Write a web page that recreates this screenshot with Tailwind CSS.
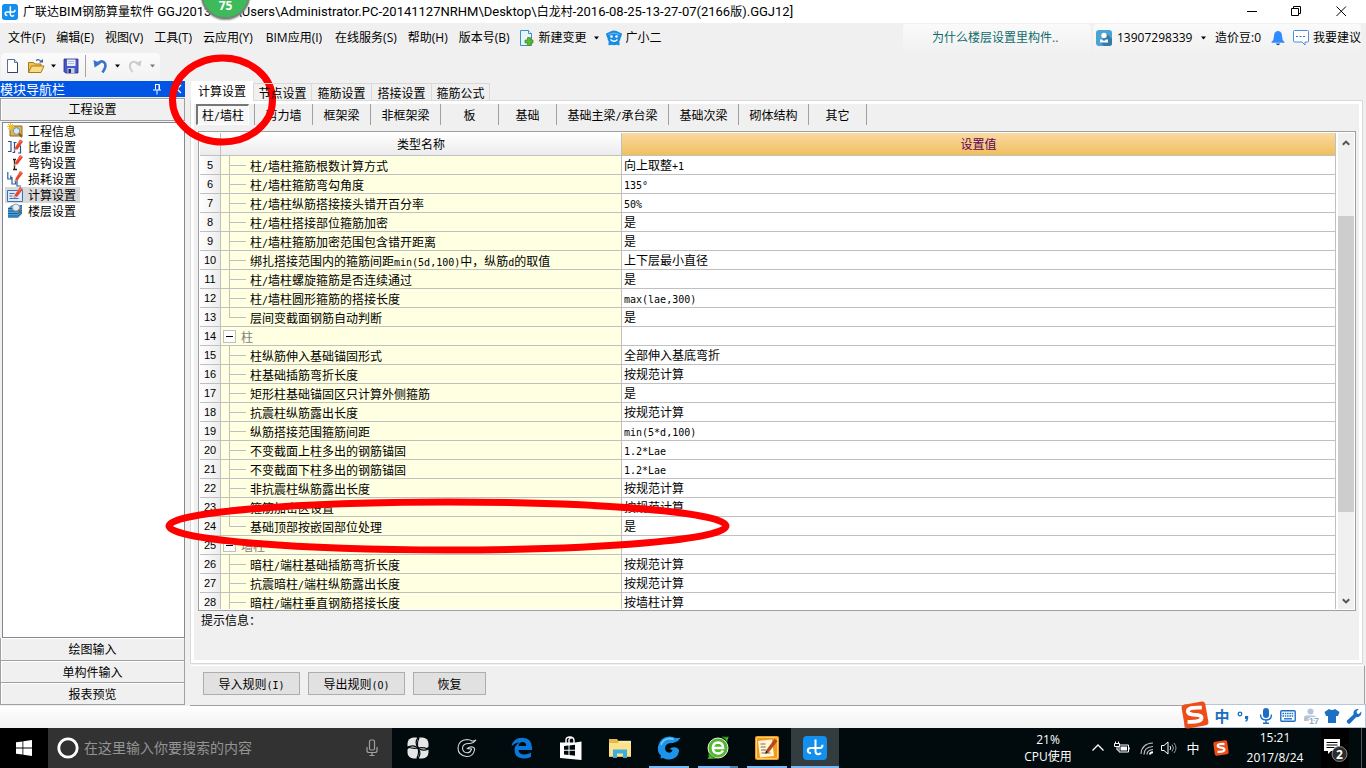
<!DOCTYPE html>
<html lang="zh-CN">
<head>
<meta charset="utf-8">
<meta name="viewport" content="width=device-width, initial-scale=1">
<title>广联达BIM钢筋算量软件 GGJ2013</title>
<script src="https://cdn.jsdelivr.net/npm/@tailwindcss/browser@4"></script>
</head>
<body class="relative flex h-screen flex-col overflow-hidden bg-[#f0f0f0] font-['Open_Sans','Noto_Sans_CJK_SC',sans-serif] text-[12px] leading-4 text-black">

<!-- Title bar -->
<header class="flex h-[23px] shrink-0 items-center bg-white pl-0.5">
  <svg class="size-4 shrink-0" viewBox="0 0 24 24"><rect width="24" height="24" rx="4" fill="#1390ee"/><path d="M12.500 3.500V15.500a2.800 2.800 0 0 0 5.300 1.200M8 17.200q-3.200-.3-3.200-2.700 0-2.500 3-2.500H17q2.500 0 2.500-3.200" fill="none" stroke="#fff" stroke-width="2.200"/></svg>
  <h1 class="ml-[5px] whitespace-pre font-['Roboto','Noto_Sans_CJK_SC',sans-serif] text-[13px]"><span class="text-[12px]">广联达</span>BIM<span class="text-[12px]">钢筋算量软件</span> GGJ2013 - [C:\Users\Administrator.PC-20141127NRHM\Desktop\<span class="text-[12px]">白龙村</span>-2016-08-25-13-27-07(2166<span class="text-[12px]">版</span>).GGJ12]</h1>
  <div class="ml-auto flex pr-0.5">
    <button aria-label="最小化" class="flex h-5 w-[45px] items-center justify-center"><svg class="size-3" viewBox="0 0 12 12"><path d="M1 5.500h10" stroke="#000"/></svg></button>
    <button aria-label="还原" class="flex h-5 w-[45px] items-center justify-center"><svg class="size-3" viewBox="0 0 12 12" fill="none" stroke="#000"><path d="M.5 2.500h7v7h-7zM2.500 2.500v-2h7v7h-2"/></svg></button>
    <button aria-label="关闭" class="flex h-5 w-[45px] items-center justify-center"><svg class="size-3" viewBox="0 0 12 12"><path d="M.5 .5l9.500 9.500M10 .5L.5 10" stroke="#000"/></svg></button>
  </div>
</header>

<!-- Menu bar -->
<nav class="flex h-[30px] shrink-0 items-center whitespace-nowrap pl-2">
  <div class="flex gap-[11px]">
    <button>文件(F)</button><button>编辑(E)</button><button>视图(V)</button><button>工具(T)</button><button>云应用(Y)</button><button class="px-0.5">BIM应用(I)</button><button>在线服务(S)</button><button>帮助(H)</button><button>版本号(B)</button>
  </div>
  <button class="ml-[9px] flex items-center gap-1">
    <svg class="size-4" viewBox="0 0 16 16"><path d="M1.500.5h8l3 3v12h-11z" fill="#e8f4fc" stroke="#3b8fc4"/><path d="M9.500.5v3h3" fill="#fff" stroke="#3b8fc4"/><path d="M8.500 7.500h3v2.500h2.500v3h-2.500v2.500h-3v-2.500h-2.500v-3h2.500z" fill="#5cb82c" stroke="#3d8c17" stroke-width=".7"/></svg>
    新建变更
    <svg class="ml-0.5 h-1 w-[7px]" viewBox="0 0 7 4"><path d="M1 .5h5L3.500 3.500z"/></svg>
  </button>
  <button class="ml-[6px] flex items-center gap-1">
    <svg class="size-4" viewBox="0 0 16 16"><path d="M8 .5q3 0 4.500 1.500L16 3.500q-.3 3-1.500 4.500 0 2-1.200 3.500l.3 3.500q-1.400.8-2.600-.2Q8 15.500 5 14.800 3.800 15.800 2.400 15l.3-3.500Q1.500 10 1.500 8 .3 6.500 0 3.500L3.500 2Q5 .5 8 .5z" fill="#188ce0"/><path d="M2.500 4.500Q8 1.500 13.500 4.500" fill="none" stroke="#6cc0f2"/><circle cx="5.500" cy="6.500" r="1.300" fill="#fff"/><circle cx="10.500" cy="6.500" r="1.300" fill="#fff"/><path d="M4.500 9.500q3.500 3.500 7 0" fill="none" stroke="#fff" stroke-width="1.300"/></svg>
    广小二
  </button>
  <div class="ml-auto flex h-7 gap-0.5 pr-[5px]">
    <a href="#" class="flex w-[188px] items-center rounded-sm bg-linear-to-b from-[#fafafa] to-[#f1f1f1] pl-[29px] text-[#0d6b6b]">为什么楼层设置里构件..</a>
    <div class="flex items-center rounded-sm bg-linear-to-b from-[#fafafa] to-[#f1f1f1] pl-[3px]">
      <button class="flex items-center">
        <svg class="mr-[5px] size-4" viewBox="0 0 16 16"><rect width="16" height="16" rx="3" fill="#4ba3d3"/><path d="M11 4l5 5v4q0 3-3 3H8l-4-4z" fill="#347ba6"/><circle cx="8" cy="5.500" r="2.700" fill="#fff"/><path d="M4 9.500h2.200L8 11l1.800-1.500H12v3H4z" fill="#fff"/></svg>
        <span class="w-[77px] text-left">13907298339</span>
        <svg class="ml-[6px] h-1 w-[7px]" viewBox="0 0 7 4"><path d="M1 .5h5L3.500 3.500z"/></svg>
      </button>
      <span class="ml-2 w-[46px]">造价豆:0</span>
      <button aria-label="通知" class="ml-[10px]"><svg class="h-4 w-[14px]" viewBox="0 0 14 16"><path d="M6 1.200q1-1 2 0Q11 2 11 6q0 4 2.500 6v.8H.5V12Q3 10 3 6q0-4 3-4.800z" fill="#2f8bff"/><path d="M5 13.500h4q-.4 1.700-2 1.700t-2-1.700z" fill="#14508f"/></svg></button>
      <button class="ml-2 flex items-center gap-1"><svg class="size-4" viewBox="0 0 16 16"><path d="M1.500.5h13a1 1 0 0 1 1 1v9.500a1 1 0 0 1-1 1h-2.500v3L9 12H1.500a1 1 0 0 1-1-1V1.500a1 1 0 0 1 1-1z" fill="#fff" stroke="#4a8ce0"/><path d="M3 6.500h10" stroke="#2a6fc8" stroke-dasharray="2 1.500"/></svg>我要建议</button>
    </div>
  </div>
</nav>

<!-- Toolbar -->
<div class="flex h-[28px] shrink-0">
  <div class="ml-px flex w-[159px] items-center rounded bg-linear-to-b from-[#fbfbfb] to-[#f2f2f2] pb-0.5 pl-1">
    <button aria-label="新建"><svg class="size-4" viewBox="0 0 16 16"><path d="M2.500 1.500h7l3 3v10h-10z" fill="#fff" stroke="#5a6f96"/><path d="M9.500 1.500v3h3" fill="#dce6f5" stroke="#5a6f96"/><path d="M12.500 5v9.500h-10" fill="none" stroke="#2d4468"/></svg></button>
    <button aria-label="打开" class="ml-[6px] flex items-center"><svg class="h-4 w-[18px]" viewBox="0 0 18 16"><path d="M1.500 14V4.500h5L8 6h6v8z" fill="#f2c24e" stroke="#a87a1e"/><path d="M1.500 14.500L4.500 8H17l-3 6.500z" fill="#fbdc83" stroke="#a87a1e"/><path d="M9 2.500q3-2 5 1" fill="none" stroke="#3a5f8c" stroke-width="1.200"/><path d="M12 4.500h4V1z" fill="#3a5f8c"/></svg><svg class="ml-[5px] h-1 w-[7px]" viewBox="0 0 7 4"><path d="M1 .5h5L3.500 3.500z"/></svg></button>
    <button aria-label="保存" class="ml-[6px]"><svg class="size-4" viewBox="0 0 16 16"><path d="M1 1h14v14H2.500L1 13.500z" fill="#4858c8" stroke="#2a2f80" stroke-width=".8"/><path d="M4 1.500h8.500V8H4z" fill="#e9eefb"/><path d="M5 3.500h6M5 5.500h6" stroke="#b0bbdd"/><path d="M4.500 10h7v5h-7z" fill="#c7cce4"/><path d="M5.500 11h2.500v4H5.500z" fill="#222a66"/></svg></button>
    <span class="mx-[6px] h-[22px] w-px bg-[#a5a5a5]"></span>
    <button aria-label="撤销" class="flex items-center"><svg class="size-4" viewBox="0 0 16 16"><path d="M1.500 2l1 7.500 6.500-4z" fill="#3a73c9"/><path d="M5 6.200q4-4.700 7.300-1.700 3 3.500-1.800 10" fill="none" stroke="#3a73c9" stroke-width="2.600"/></svg><svg class="ml-[6px] h-1 w-[7px]" viewBox="0 0 7 4"><path d="M1 .5h5L3.500 3.500z"/></svg></button>
    <button aria-label="重做" disabled class="ml-[6px] flex items-center"><svg class="size-4" viewBox="0 0 16 16"><path d="M14.500 2.500l-1.200 6-5.300-3z" fill="#c8c8c8"/><path d="M12 6.500Q7.500 2 4 5q-3 3.500 1.500 9" fill="none" stroke="#cdcdcd" stroke-width="2"/></svg><svg class="ml-[6px] h-1 w-[7px]" viewBox="0 0 7 4"><path d="M1 .5h5L3.500 3.500z" fill="#777"/></svg></button>
  </div>
</div>

<div class="flex min-h-0 flex-1 font-['Noto_Sans_CJK_SC',sans-serif]">

  <!-- Module navigation -->
  <aside class="flex w-[185px] shrink-0 flex-col">
    <div class="flex h-4 shrink-0 items-center bg-[#0055e5] text-white"><h2 class="text-[13px] leading-[14px]">模块导航栏</h2>
      <button aria-label="固定" class="ml-auto"><svg class="size-3" viewBox="0 0 12 12" fill="none" stroke="#fff"><path d="M4 1.500h4.500v5M4.500 1.500v5M2 7h8M6 7v4.500M8 2v5"/></svg></button>
      <button aria-label="关闭面板" class="ml-2 mr-0.5"><svg class="size-3" viewBox="0 0 12 12"><path d="M2 2l8 8M10 2l-8 8" stroke="#fff" stroke-width="1.300"/></svg></button>
    </div>
    <button class="mt-px h-[23px] shrink-0 border border-[#a0a0a0] pb-0.5 shadow-[inset_1px_1px_0_#fff]">工程设置</button>
    <ul class="ml-0.5 mt-px min-h-0 flex-1 border border-[#828790] bg-white pl-0.5">
      <li><button class="flex h-4 w-[75px] items-center gap-[5px] pl-0.5 leading-4 whitespace-nowrap"><svg class="size-4 shrink-0" viewBox="0 0 16 16"><path d="M4 3h11v10H3V6z" fill="#e2b64a" stroke="#946a17"/><path d="M3.500 0v7M0 3.500h7M1 1l5 5M6 1L1 6" stroke="#f2c21c"/><circle cx="9.500" cy="8" r="3.300" fill="#d5e9fb" stroke="#7890ac"/><path d="M12 10.500l3 3.500" stroke="#8c5a1e" stroke-width="2"/></svg>工程信息</button></li>
      <li><button class="flex h-4 w-[75px] items-center gap-[5px] pl-0.5 leading-4 whitespace-nowrap"><svg class="size-4 shrink-0" viewBox="0 0 16 16"><path d="M1 2.500h3v10H1M9.500 3.500H6.500M7.500 3.500v10h-2M11 7h2.500v7H11" fill="none" stroke="#2c4f8f" stroke-width="1.200"/><path d="M7.500 9.500L13 .5l3 2-5.500 8z" fill="#e8432c"/><path d="M9.500 6L14.500.8l1 .7z" fill="#f58a74"/><path d="M7.500 9.500l-.8 2.500 3.800-1.500z" fill="#d8a560"/></svg>比重设置</button></li>
      <li><button class="flex h-4 w-[75px] items-center gap-[5px] pl-0.5 leading-4 whitespace-nowrap"><svg class="size-4 shrink-0" viewBox="0 0 16 16"><path d="M6 4.500h3M7.500 4.500V14M6 14.500h4" fill="none" stroke="#222" stroke-width="1.300"/><path d="M7.500 8.500L13 0l3 2-5.500 7.500z" fill="#e8432c"/><path d="M9.500 5.500L14.500.5l1 .7z" fill="#f58a74"/><path d="M7.500 8.500l-.8 2.500 3.800-1.500z" fill="#d8a560"/></svg>弯钩设置</button></li>
      <li><button class="flex h-4 w-[75px] items-center gap-[5px] pl-0.5 leading-4 whitespace-nowrap"><svg class="size-4 shrink-0" viewBox="0 0 16 16"><path d="M.8 1v7h3V4.500M5 6v7h3.500V9M10 9v6h4" fill="none" stroke="#2c5f9f" stroke-width="1.200"/><path d="M8 8.500L13 0l3 2-5.500 7.500z" fill="#e8432c"/><path d="M9.500 5.500L14.500.5l1 .7z" fill="#f58a74"/><path d="M8 8.500L7.200 11l3.300-1.500z" fill="#d8a560"/></svg>损耗设置</button></li>
      <li><button aria-current="page" class="flex h-4 w-[75px] items-center gap-[5px] bg-[#d9d9d9] pl-0.5 leading-4 whitespace-nowrap"><svg class="size-4 shrink-0" viewBox="0 0 16 16"><path d="M.5 3.500h15v11H.5z" fill="#dbe9fb" stroke="#3f6fb5"/><path d="M2.500 6.500h5M2.500 9h3M2.500 11.500h9" stroke="#3f6fb5"/><path d="M7 9L13 0l3 2-6 8z" fill="#e8432c"/><path d="M9 6L14.500.5l1 .7z" fill="#f58a74"/><path d="M7 9l-.8 2.500L10 10z" fill="#d8a560"/></svg>计算设置</button></li>
      <li><button class="flex h-4 w-[75px] items-center gap-[5px] pl-0.5 leading-4 whitespace-nowrap"><svg class="size-4 shrink-0" viewBox="0 0 16 16"><path d="M1 5l4-3h10v9l-4 4H1z" fill="#4f9fd4"/><path d="M1 5.500h10l4-3.500M1 8h10l4-3.500M1 10.500h10l4-3.500M1 13h10l4-3.500" fill="none" stroke="#1d5d96"/><circle cx="9" cy="4.500" r="3.500" fill="#e6edf4" stroke="#9a9fa8"/><path d="M11.500 7l3 3" stroke="#8c5a1e" stroke-width="1.600"/></svg>楼层设置</button></li>
    </ul>
    <button class="h-[23px] shrink-0 border-x border-b border-[#a0a0a0] shadow-[inset_1px_1px_0_#fff]">绘图输入</button>
    <button class="h-[22px] shrink-0 border-x border-b border-[#a0a0a0] shadow-[inset_1px_1px_0_#fff]">单构件输入</button>
    <button class="mb-px h-[22px] shrink-0 border-x border-b border-[#a0a0a0] shadow-[inset_1px_1px_0_#fff]">报表预览</button>
  </aside>

  <!-- Work area -->
  <main class="flex min-w-0 flex-1 flex-col pl-[5px]">
    <div role="tablist" class="relative z-10 -mb-px flex h-5 shrink-0 items-end">
      <button role="tab" aria-selected="true" class="ml-px -mb-0.5 h-[22px] w-[62px] bg-white pb-[3px]">计算设置</button>
      <button role="tab" class="h-[18px] w-[59px] border-x border-t border-[#d9d9d9]">节点设置</button>
      <button role="tab" class="h-[18px] w-[60px] border-r border-t border-[#d9d9d9]">箍筋设置</button>
      <button role="tab" class="h-[18px] w-[60px] border-r border-t border-[#d9d9d9]">搭接设置</button>
      <button role="tab" class="h-[18px] w-[58px] border-r border-t border-[#d9d9d9]">箍筋公式</button>
    </div>
    <section class="mr-[3px] flex min-h-0 flex-1 flex-col border border-[#d9d9d9] bg-white p-[3px]">
      <div class="flex min-h-0 flex-1 flex-col bg-[#f0f0f0] pr-[3px] pl-1">
        <div class="-ml-0.5 flex h-[27px] shrink-0 items-start whitespace-nowrap">
          <button aria-pressed="true" class="mr-[5px] h-[21px] w-[53px] shrink-0 border-t-2 border-r border-b border-l-2 border-t-[#777] border-r-white border-b-white border-l-[#777] bg-[#f8f8f8]">柱<span class="font-['DejaVu_Sans_Mono'] text-[10px] leading-none">/</span>墙柱</button>
          <button class="h-[21px] w-[59px] border-x border-[#a0a0a0]">剪力墙</button>
          <button class="h-[21px] w-[58px] border-r border-[#a0a0a0]">框架梁</button>
          <button class="h-[21px] w-[70px] border-r border-[#a0a0a0]">非框架梁</button>
          <button class="h-[21px] w-[58px] border-r border-[#a0a0a0]">板</button>
          <button class="h-[21px] w-[58px] border-r border-[#a0a0a0]">基础</button>
          <button class="h-[21px] w-[112px] border-r border-[#a0a0a0]">基础主梁<span class="font-['DejaVu_Sans_Mono'] text-[10px] leading-none">/</span>承台梁</button>
          <button class="h-[21px] w-[70px] border-r border-[#a0a0a0]">基础次梁</button>
          <button class="h-[21px] w-[70px] border-r border-[#a0a0a0]">砌体结构</button>
          <button class="h-[21px] w-[58px] border-r border-[#a0a0a0]">其它</button>
        </div>
        <div class="flex min-h-0 flex-1 border border-[#a0a0a0] bg-white p-px">
          <div class="min-w-0 flex-1 overflow-hidden">
            <table class="w-full table-fixed border-separate border-spacing-0">
              <colgroup><col class="w-[21px]"><col class="w-[401px]"><col></colgroup>
              <thead>
                <tr class="h-[23px]">
                  <th class="border-r border-b border-[#c0c0c0] bg-linear-to-b from-white to-[#ececec] p-0" aria-label="序号"></th>
                  <th class="border-r border-b border-[#c0c0c0] bg-linear-to-b from-white to-[#ececec] p-0 font-normal">类型名称</th>
                  <th class="border-r border-b border-[#c0c0c0] bg-linear-to-b from-[#fad9a0] to-[#f0bf5c] p-0 font-normal text-[#600060]">设置值</th>
                </tr>
              </thead>
              <tbody id="rows"></tbody>
            </table>
          </div>
          <div class="ml-0.5 flex w-4 shrink-0 flex-col bg-[#f0f0f0]">
            <button aria-label="向上滚动" class="flex h-5 shrink-0 items-center justify-center"><svg class="size-2" viewBox="0 0 8 8"><path d="M.8 5.800L4 2.600l3.200 3.200" fill="none" stroke="#555" stroke-width="2"/></svg></button>
            <div class="flex min-h-0 flex-1 flex-col"><div class="grow-[62]"></div><div class="grow-[294] bg-[#cdcdcd]"></div><div class="grow-[80]"></div></div>
            <button aria-label="向下滚动" class="flex h-4 shrink-0 items-center justify-center"><svg class="size-2" viewBox="0 0 8 8"><path d="M.8 2.200L4 5.400l3.200-3.200" fill="none" stroke="#555" stroke-width="2"/></svg></button>
          </div>
        </div>
        <p class="h-[49px] shrink-0 pt-px pl-[3px]">提示信息：</p>
      </div>
    </section>
    <footer class="mt-px mr-px flex h-[41px] shrink-0 items-center gap-2 border-t border-r border-b border-t-white border-r-[#a0a0a0] border-b-[#a0a0a0] pb-1 pl-[13px]">
      <button class="h-[23px] w-[97px] border border-[#adadad] bg-[#e1e1e1]">导入规则<span class="font-['DejaVu_Sans_Mono'] text-[10px] leading-none">(I)</span></button>
      <button class="h-[23px] w-[97px] border border-[#adadad] bg-[#e1e1e1]">导出规则<span class="font-['DejaVu_Sans_Mono'] text-[10px] leading-none">(O)</span></button>
      <button class="h-[23px] w-[73px] border border-[#adadad] bg-[#e1e1e1]">恢复</button>
    </footer>
  </main>
</div>

<!-- Status strip with the input method bar -->
<div class="flex h-[22px] shrink-0 justify-end bg-linear-to-b from-white to-[#f2f2f2]">
  <div class="relative -mt-0.5 flex h-6 w-[182px] items-center border border-[#b5c6dd] bg-white pl-[28px] text-[#1c6fc4]">
    <svg class="absolute -top-1 -left-1 size-7" viewBox="0 0 28 28"><g transform="rotate(-10 14 14)"><rect x="2" y="2" width="24" height="24" rx="3" fill="#ee4d18"/><path d="M22 8Q8 4.500 7.500 9.500q0 3 6.500 4.300 6.500 1.200 6 4.200Q19 22.500 5.500 19.500" fill="none" stroke="#fff" stroke-width="3.800"/></g></svg>
    <button class="w-[18px] text-[15px] leading-5 font-bold">中</button>
    <button aria-label="标点" class="ml-1"><svg class="size-4" viewBox="0 0 16 16"><circle cx="5" cy="6" r="1.800" fill="none" stroke="#1c6fc4" stroke-width="1.300"/><path d="M10 8h3.200v2.500q0 2.500-2.700 3.500v-1.500q1-.6 1-1.500H10z" fill="#1c6fc4"/></svg></button>
    <button aria-label="语音" class="ml-[7px]"><svg class="size-4" viewBox="0 0 16 16"><rect x="5" y="0" width="6" height="10" rx="3" fill="#1c6fc4"/><path d="M2.500 6.500q0 5.500 5.500 5.500t5.500-5.500M8 12v3M5 15.300h6" fill="none" stroke="#1c6fc4" stroke-width="1.400"/></svg></button>
    <button aria-label="键盘" class="ml-[6px]"><svg class="size-4" viewBox="0 0 16 16"><rect x=".8" y="2.800" width="14.400" height="10.400" rx="1" fill="#fff" stroke="#1c6fc4" stroke-width="1.400"/><path d="M2.500 5.500h11M2.500 8h11" stroke="#1c6fc4" stroke-width="1.500" stroke-dasharray="1.500 .8"/><path d="M4 10.800h8" stroke="#1c6fc4" stroke-width="1.400"/></svg></button>
    <button aria-label="用户" class="ml-2"><svg class="size-4" viewBox="0 0 16 16"><circle cx="6.500" cy="3.500" r="3" fill="#b7c3d9"/><path d="M0 13V10q0-2.500 3-2.500h6.500q2 0 2.500 1.500v4z" fill="#b7c3d9"/><text x="5" y="15.500" font-family="Liberation Sans" font-size="9" font-weight="bold" fill="#9aa7bd" stroke="#fff" stroke-width="2" paint-order="stroke">17</text></svg></button>
    <button aria-label="皮肤" class="ml-1"><svg class="size-4" viewBox="0 0 16 16"><path d="M5 1q3 2 6 0l4.500 3L14 8h-2v7H4V8H2L.5 4z" fill="#1c6fc4"/></svg></button>
    <button aria-label="工具箱" class="ml-[6px]"><svg class="size-4" viewBox="0 0 16 16"><path d="M1 12.500L7.500 6.500Q7 3 9.500 1.500 11 .6 12.800 1L10.500 3.500 11 5.500l2 .5L15.200 3.500q.6 2-.7 4-1.800 2.300-4.500 1.700L4 15.500q-1 .8-2.300-.3-1.400-1.500-.7-2.700z" fill="#1c6fc4"/></svg></button>
  </div>
</div>

<!-- Taskbar -->
<footer class="flex h-10 shrink-0 bg-[#010b0e] text-white">
  <button aria-label="开始" class="flex w-12 shrink-0 items-center justify-center bg-black"><svg class="size-4" viewBox="0 0 16 16" fill="#fff"><path d="M0 2.300l6.500-.9v6.200H0zM7.300 1.300L16 0v7.600H7.300zM0 8.400h6.500v6.200L0 13.700zM7.300 8.400H16V16l-8.700-1.300z"/></svg></button>
  <label class="flex w-[344px] shrink-0 items-center bg-[#323232] pl-2">
    <svg class="size-6 shrink-0" viewBox="0 0 24 24"><circle cx="12" cy="12" r="9.200" fill="none" stroke="#fff" stroke-width="2.800"/></svg>
    <input type="text" aria-label="搜索" placeholder="在这里输入你要搜索的内容" class="ml-1 min-w-0 flex-1 bg-transparent text-[14px] leading-5 outline-none placeholder:text-[#949494]">
    <svg class="mr-3 h-[18px] w-4 shrink-0" viewBox="0 0 16 18" fill="none" stroke="#a0a0a0" stroke-width="1.200"><rect x="5.500" y="1" width="5" height="10" rx="1.500"/><path d="M3 8v3.500q0 2 2 2h6q2 0 2-2V8M8 13.500v3M5.500 16.500h5"/></svg>
  </label>
  <div class="ml-0.5 flex gap-px">
    <button aria-label="应用" class="flex w-12 items-center justify-center"><svg class="size-[22px]" viewBox="0 0 22 22"><g fill="#e6e6e6"><rect x=".5" y=".5" width="21" height="21" rx="6"/></g><g fill="none" stroke="#010b0e" stroke-width="1.200"><path d="M11.500 0Q7 5 11 11Q15 17 10.500 22"/><path d="M0 10.500Q6 7 11 11Q16 15 22 11.500"/><path d="M1 10Q6 12 11 11Q9.500 6 12 1M21 12Q16 10 11 11Q12.500 16 10 21"/></g><path d="M9.500 0h3L11.500 3zM9.500 22h3l-2-3zM0 9.500v3l3-2zM22 9.500v3l-3-1z" fill="#010b0e"/></svg></button>
    <button aria-label="G 浏览" class="flex w-12 items-center justify-center"><svg class="size-5" viewBox="0 0 20 20" fill="none" stroke="#d8d8d8" stroke-width="1.100"><path d="M19 2q-2 3-6 3.500Q6 5 5.500 10q.2 4.500 4.500 4.800 3.500 0 4.500-3.800l-4-.5q2-2 5-1.500 2.500.5 2 3Q16 19 9.500 18.500 1 17.500 1 10 1.500 2 10 1.500q3 0 5 1.500 2 .2 4-1z"/></svg></button>
    <button aria-label="Edge" class="ml-[6px] flex w-12 items-center justify-center"><svg class="size-[22px]" viewBox="0 0 22 22"><path d="M.5 9.500Q2 .800 11.500.800 20.500 1 21 10.500v2.500H7.500q.5 4.500 6 4.500 3.500 0 6.500-1.700v4.200q-3.500 1.500-7.500 1.500-9.500-.5-9-9.500Q4 8 8.500 5.500 4 5.500.5 9.500zM7.500 9h7.700q0-4-3.700-4-3.600.3-4 4z" fill="#0a78d8"/></svg></button>
    <button aria-label="应用商店" class="flex w-12 items-center justify-center"><svg class="h-6 w-[22px]" viewBox="0 0 22 24"><path d="M6 7V4q0-3 4-3 3.500 0 4 3v3M9 7V3.500Q10.500 1 13.500 2" fill="none" stroke="#fff" stroke-width="1.400"/><path d="M0 6.500h15l6.500-1V24L0 22z" fill="#fff"/><path d="M4 10l4.500-.5v4.300H4zM9.500 9.400L15 8.800v5H9.500zM4 14.700h4.500V19L4 18.500zM9.500 14.700H15v5l-5.500-.6z" fill="#010b0e"/></svg></button>
    <button aria-label="文件资源管理器" class="flex w-12 items-center justify-center"><svg class="size-[22px]" viewBox="0 0 22 22"><path d="M0 2h8l1.500 2H22v16H0z" fill="#e7b84c"/><path d="M0 6h22v13H0z" fill="#fde08a"/><path d="M9.500 3.800H22V6H9.500z" fill="#fde9ae"/><path d="M4 21v-8.500h14V21h-4v-4.500H8V21z" fill="#3aafe0"/></svg></button>
    <button aria-label="G 浏览器" class="flex w-12 flex-col items-center"><span class="flex flex-1 items-center pt-0.5"><svg class="size-6" viewBox="0 0 24 24"><path d="M23.500 1.500Q22 5.500 16 7 9 6.500 8 11.500q0 5 4.500 5.300 2.500-.3 3-2.800l-3-1Q15 10.500 19 11.500q3.500 1.500 3 4-1.500 7.500-9.500 8-4 .2-6-1.500l-3 .5.5-3Q0 16.500 1 10.500 3 1 12.500.5q4 0 6 1.500 2.500.3 5-.5z" fill="#1d94ea"/><path d="M4 9Q6 3 12.500 2.500q3 0 4 1" fill="none" stroke="#6fd0fb" stroke-width="1.500"/></svg></span><span class="h-0.5 w-10 bg-[#76b9f5]"></span></button>
    <button aria-label="安全浏览器" class="flex w-12 flex-col items-center"><span class="flex flex-1 items-center pt-0.5"><svg class="size-6" viewBox="0 0 24 24"><circle cx="12" cy="12" r="10" fill="#52b82d" stroke="#e7f5df"/><path d="M17 14.500q-1.500 3-5 3-5-.3-5.200-5.500Q7 6.800 12 6.500q5 .3 5.200 5.500H7.500" fill="none" stroke="#fff" stroke-width="2.400"/><path d="M2 23q1.500-2 1-5.500 3 4 7 5M22.500 1q-3 .5-6 0 4 2 4.500 5" fill="#52b82d" stroke="#2b8a14"/></svg></span><span class="flex h-0.5 w-10 bg-[#76b9f5]"><span class="ml-auto w-2 bg-[#527ea8]"></span></span></button>
    <button aria-label="记事" class="flex w-12 flex-col items-center"><span class="flex flex-1 items-center pt-0.5"><svg class="size-6" viewBox="0 0 24 24"><rect width="24" height="24" rx="2" fill="#f29a1d"/><rect x="1.500" y="1.500" width="21" height="21" rx="1.500" fill="none" stroke="#ffd27a"/><path d="M3 5l14-1.500L19 20 5 21.500z" fill="#fff6dc"/><path d="M5.500 8h5M5.700 11h5M6 14h5M6.500 17h9" stroke="#8d6a3a"/><path d="M11 14.500L19.500 3l3 2L14 16z" fill="#b5491b"/><path d="M11 14.500l-1 3.500 4-2z" fill="#3a2412"/></svg></span><span class="h-0.5 w-10 bg-[#76b9f5]"></span></button>
    <button aria-label="广联达" class="-ml-px flex w-12 flex-col items-center bg-[#333d40]"><span class="flex flex-1 items-center pt-0.5"><svg class="size-6" viewBox="0 0 24 24"><rect width="24" height="24" rx="4" fill="#1390ee"/><path d="M12.500 3.500V15.500a2.800 2.800 0 0 0 5.300 1.200M8 17.200q-3.200-.3-3.200-2.700 0-2.500 3-2.500H17q2.500 0 2.500-3.200" fill="none" stroke="#fff" stroke-width="2"/></svg></span><span class="h-0.5 w-12 bg-[#76b9f5]"></span></button>
  </div>
  <div class="ml-auto flex items-center">
    <div class="w-16 text-center leading-[17px]"><div>21%</div><div>CPU使用</div></div>
    <button aria-label="显示隐藏图标" class="ml-[11px]"><svg class="h-4 w-[14px]" viewBox="0 0 14 16"><path d="M1.500 10.500L7 5l5.500 5.500" fill="none" stroke="#fff" stroke-width="1.300"/></svg></button>
    <svg class="ml-[9px] size-4" viewBox="0 0 16 16"><path d="M5 5h9.500v7H5z" fill="none" stroke="#fff"/><path d="M6.500 6.500h6.500v4H6.500z" fill="#fff"/><path d="M15 7.500v2" stroke="#fff" stroke-width="1.600"/><path d="M.5 3.500h5v3h-5zM1.500 1.500v2M4.500 1.500v2M3 6.500V10h2" fill="#010b0e" stroke="#fff"/></svg>
    <svg class="ml-[9px] size-4" viewBox="0 0 16 16" fill="none" stroke="#bbb" stroke-width="1.200"><path d="M2 14Q2.500 3.500 14 3"/><path d="M5 14.500Q5 7 14 6.500"/><path d="M8 14.500q0-4.500 6-5"/><path d="M11 14.500q0-2 3-2.200" stroke="#fff" stroke-width="2"/></svg>
    <svg class="ml-[6px] size-4" viewBox="0 0 16 16" fill="none" stroke="#fff"><path d="M.5 5.500H3L7 2v12L3 10.500H.5z"/><path d="M9 6q1.500 2 0 4" /><path d="M11 4.500q3 3.500 0 7M13 3q4 5 0 10" stroke="#999"/></svg>
    <button class="ml-2 w-4 text-[13px] leading-4">中</button>
    <svg class="ml-3 size-4" viewBox="0 0 16 16"><g transform="rotate(-8 8 8)"><rect x="1" y="1" width="14" height="14" rx="2" fill="#ee4d18"/><path d="M12 4.600Q5 3 5 5.500q0 1.300 3.200 2.200 3.400.8 3 2.500Q10.500 12.500 4 11.300" fill="none" stroke="#fff" stroke-width="2.200"/></g></svg>
    <div class="ml-[11px] flex h-full w-[70px] flex-col justify-center text-center leading-5"><time>15:21</time><time>2017/8/24</time></div>
    <button aria-label="2 条通知" class="ml-[11px] flex h-full items-center bg-black"><svg class="h-7 w-7" viewBox="0 0 28 28"><path d="M3 5h16v12h-9l-3 3v-3H3z" fill="#fff"/><path d="M5.500 8.500h11M5.500 11h11M5.500 13.500h8" stroke="#000"/><circle cx="18.500" cy="20" r="7.500" fill="#2b2b2b" stroke="#8a8a8a"/><text x="18.500" y="24.500" text-anchor="middle" font-family="Open Sans" font-size="12" font-weight="bold" fill="#fff">2</text></svg></button>
    <span class="mr-1 ml-3 h-full w-px bg-[#555]"></span>
  </div>
</footer>

<!-- Floating speed ball and red markup, drawn over the window -->
<div class="absolute -top-[30px] left-[201px] flex size-[49px] items-end justify-center rounded-full border-2 border-[#6d8a74] bg-[#3dbb5b] pb-[3px] text-[12px] leading-4 font-bold text-white shadow-[0_1px_2px_#888]">75</div>
<svg class="pointer-events-none absolute top-0 left-0 h-[560px] w-[740px]" viewBox="0 0 740 560" fill="none" stroke="#ff0000" stroke-width="7" aria-hidden="true"><ellipse cx="222.500" cy="100" rx="50" ry="42"/><ellipse cx="447.500" cy="526" rx="278.500" ry="24"/></svg>

<script>
const data = [
  [5, '柱/墙柱箍筋根数计算方式', '向上取整+1'], [6, '柱/墙柱箍筋弯勾角度', '135°'],
  [7, '柱/墙柱纵筋搭接接头错开百分率', '50%'], [8, '柱/墙柱搭接部位箍筋加密', '是'],
  [9, '柱/墙柱箍筋加密范围包含错开距离', '是'], [10, '绑扎搭接范围内的箍筋间距min(5d,100)中，纵筋d的取值', '上下层最小直径'],
  [11, '柱/墙柱螺旋箍筋是否连续通过', '是'], [12, '柱/墙柱圆形箍筋的搭接长度', 'max(lae,300)'],
  [13, '层间变截面钢筋自动判断', '是', 'last'], [14, '柱', '', 'group'],
  [15, '柱纵筋伸入基础锚固形式', '全部伸入基底弯折'], [16, '柱基础插筋弯折长度', '按规范计算'],
  [17, '矩形柱基础锚固区只计算外侧箍筋', '是'], [18, '抗震柱纵筋露出长度', '按规范计算'],
  [19, '纵筋搭接范围箍筋间距', 'min(5*d,100)'], [20, '不变截面上柱多出的钢筋锚固', '1.2*Lae'],
  [21, '不变截面下柱多出的钢筋锚固', '1.2*Lae'], [22, '非抗震柱纵筋露出长度', '按规范计算'],
  [23, '箍筋加密区设置', '按规范计算'], [24, '基础顶部按嵌固部位处理', '是', 'last'],
  [25, '墙柱', '', 'group'], [26, '暗柱/端柱基础插筋弯折长度', '按规范计算'],
  [27, '抗震暗柱/端柱纵筋露出长度', '按规范计算'], [28, '暗柱/端柱垂直钢筋搭接长度', '按墙柱计算'],
];
const mono = s => s.replace(/[\x21-\x7e°]+/g, m => `<span class="font-['DejaVu_Sans_Mono',monospace] text-[10px] leading-none">${m}</span>`);
const branch = {
  undefined: '<svg class="mr-1 h-[19px] w-[17px] shrink-0" viewBox="0 0 17 19"><path d="M.5 0v19M0 9.500h17" stroke="#c0c0c0"/></svg>',
  last: '<svg class="mr-1 h-[19px] w-[17px] shrink-0" viewBox="0 0 17 19"><path d="M.5 0v9.500H17" fill="none" stroke="#c0c0c0"/></svg>',
};
const toggle = '<button aria-label="折叠" class="mr-[5px] flex size-[13px] shrink-0 items-center justify-center self-center border border-[#c0c0c0] bg-white"><span class="h-px w-[7px] bg-black"></span></button>';
document.getElementById('rows').innerHTML = data.map(([n, name, value, kind]) => `
<tr class="h-[19px]">
  <td class="border-r border-b border-[#c0c0c0] bg-linear-to-r from-white to-[#ececec] p-0 text-center font-['Liberation_Sans'] text-[11px] leading-[18px]">${n}</td>
  <td class="border-r border-b border-[#c0c0c0] bg-[#ffffe1] p-0"><div class="flex h-[18px] items-start leading-[18px] whitespace-pre ${kind === 'group' ? 'pl-0.5 text-[#808080]' : 'pl-2'}">${kind === 'group' ? toggle : branch[kind]}<span class="pt-px">${mono(name)}</span></div></td>
  <td class="border-r border-b border-[#c0c0c0] bg-white p-0"><div class="h-[18px] pl-0.5 leading-[18px]">${mono(value)}</div></td>
</tr>`).join('');
</script>
</body>
</html>
